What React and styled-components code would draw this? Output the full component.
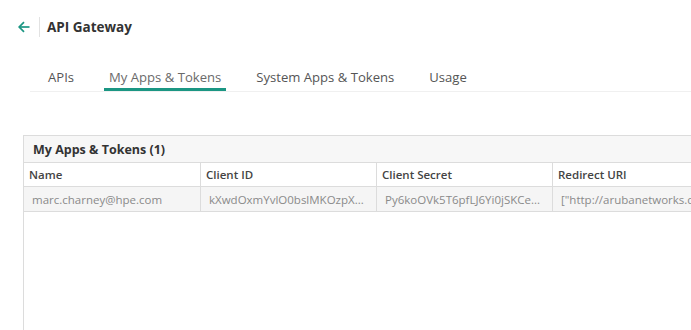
import React from 'react';
import styled, { createGlobalStyle } from 'styled-components';

const GlobalStyle = createGlobalStyle`
    html, body {
        margin: 0;
        padding: 0;
        overflow: hidden;
        background: #ffffff;
        font-family: 'Open Sans', 'Noto Sans', sans-serif;
    }
`;

const Page = styled.div`
    width: 691px;
    height: 330px;
    overflow: hidden;
`;

const Header = styled.header`
    display: flex;
    align-items: center;
    height: 54px;
    padding-left: 18px;
`;

const BackButton = styled.button`
    display: flex;
    align-items: center;
    padding: 0;
    margin: 0;
    border: none;
    background: none;
    color: #1b9683;
    cursor: pointer;
`;

const Divider = styled.span`
    width: 1px;
    height: 20px;
    margin: 0 7px 0 9px;
    background: #e2e2e2;
`;

const Title = styled.h1`
    margin: 0;
    font-size: 13.5px;
    font-weight: 700;
    color: #333333;
`;

const TabBar = styled.nav`
    display: flex;
    gap: 25px;
    margin: 12px 0 0 30px;
    padding-left: 13px;
    border-bottom: 1px solid #f0f0f0;
`;

const Tab = styled.a`
    padding: 1px 5px 1px;
    font-size: 13.1px;
    line-height: 20px;
    color: ${p => (p.active ? '#6a6a6a' : '#555555')};
    border-bottom: 3px solid ${p => (p.active ? '#1b9683' : 'transparent')};
    cursor: pointer;
`;

const Panel = styled.section`
    margin: 43px 0 0 23px;
    width: 900px;
    height: 300px;
    border-left: 1px solid #dcdcdc;
    border-top: 1px solid #dcdcdc;
`;

const PanelTitle = styled.div`
    height: 26px;
    padding-left: 9px;
    display: flex;
    align-items: center;
    background: #f7f7f7;
    border-bottom: 1px solid #dcdcdc;
    font-size: 12.5px;
    font-weight: 700;
    color: #333333;
`;

const Row = styled.div`
    display: grid;
    grid-template-columns: 177px 176px 176px 1fr;
    height: ${p => (p.head ? '23px' : '24px')};
    background: ${p => (p.head ? '#ffffff' : '#f5f5f5')};
    border-bottom: 1px solid #dcdcdc;
`;

const Cell = styled.div`
    display: flex;
    align-items: center;
    padding-left: ${p => (p.head ? '5px' : '8px')};
    border-right: 1px solid #dcdcdc;
    font-size: 11.5px;
    font-weight: ${p => (p.head ? 600 : 400)};
    color: ${p => (p.head ? '#444444' : '#8a8a8a')};
    white-space: nowrap;
    overflow: hidden;
`;

const columns = ['Name', 'Client ID', 'Client Secret', 'Redirect URI'];

const apps = [
    {
        name: 'marc.charney@hpe.com',
        clientId: 'kXwdOxmYvlO0bslMKOzpX...',
        secret: 'Py6koOVk5T6pfLJ6Yi0jSKCe...',
        redirect: '["http://arubanetworks.com"]',
    },
];

const App = () => (
    <Page>
        <GlobalStyle />
        <Header>
            <BackButton aria-label="Back">
                <svg width="12" height="12" viewBox="0 0 12 12" fill="none" stroke="currentColor" strokeWidth="1.7">
                    <path d="M11.5 6H1.2" />
                    <path d="M6 1.2L1.2 6L6 10.8" />
                </svg>
            </BackButton>
            <Divider />
            <Title>API Gateway</Title>
        </Header>

        <TabBar>
            <Tab>APIs</Tab>
            <Tab active>My Apps &amp; Tokens</Tab>
            <Tab>System Apps &amp; Tokens</Tab>
            <Tab>Usage</Tab>
        </TabBar>

        <Panel>
            <PanelTitle>My Apps &amp; Tokens ({apps.length})</PanelTitle>
            <Row head>
                {columns.map(c => (
                    <Cell head key={c}>{c}</Cell>
                ))}
            </Row>
            {apps.map(a => (
                <Row key={a.clientId}>
                    <Cell>{a.name}</Cell>
                    <Cell>{a.clientId}</Cell>
                    <Cell>{a.secret}</Cell>
                    <Cell>{a.redirect}</Cell>
                </Row>
            ))}
        </Panel>
    </Page>
);

export default App;
